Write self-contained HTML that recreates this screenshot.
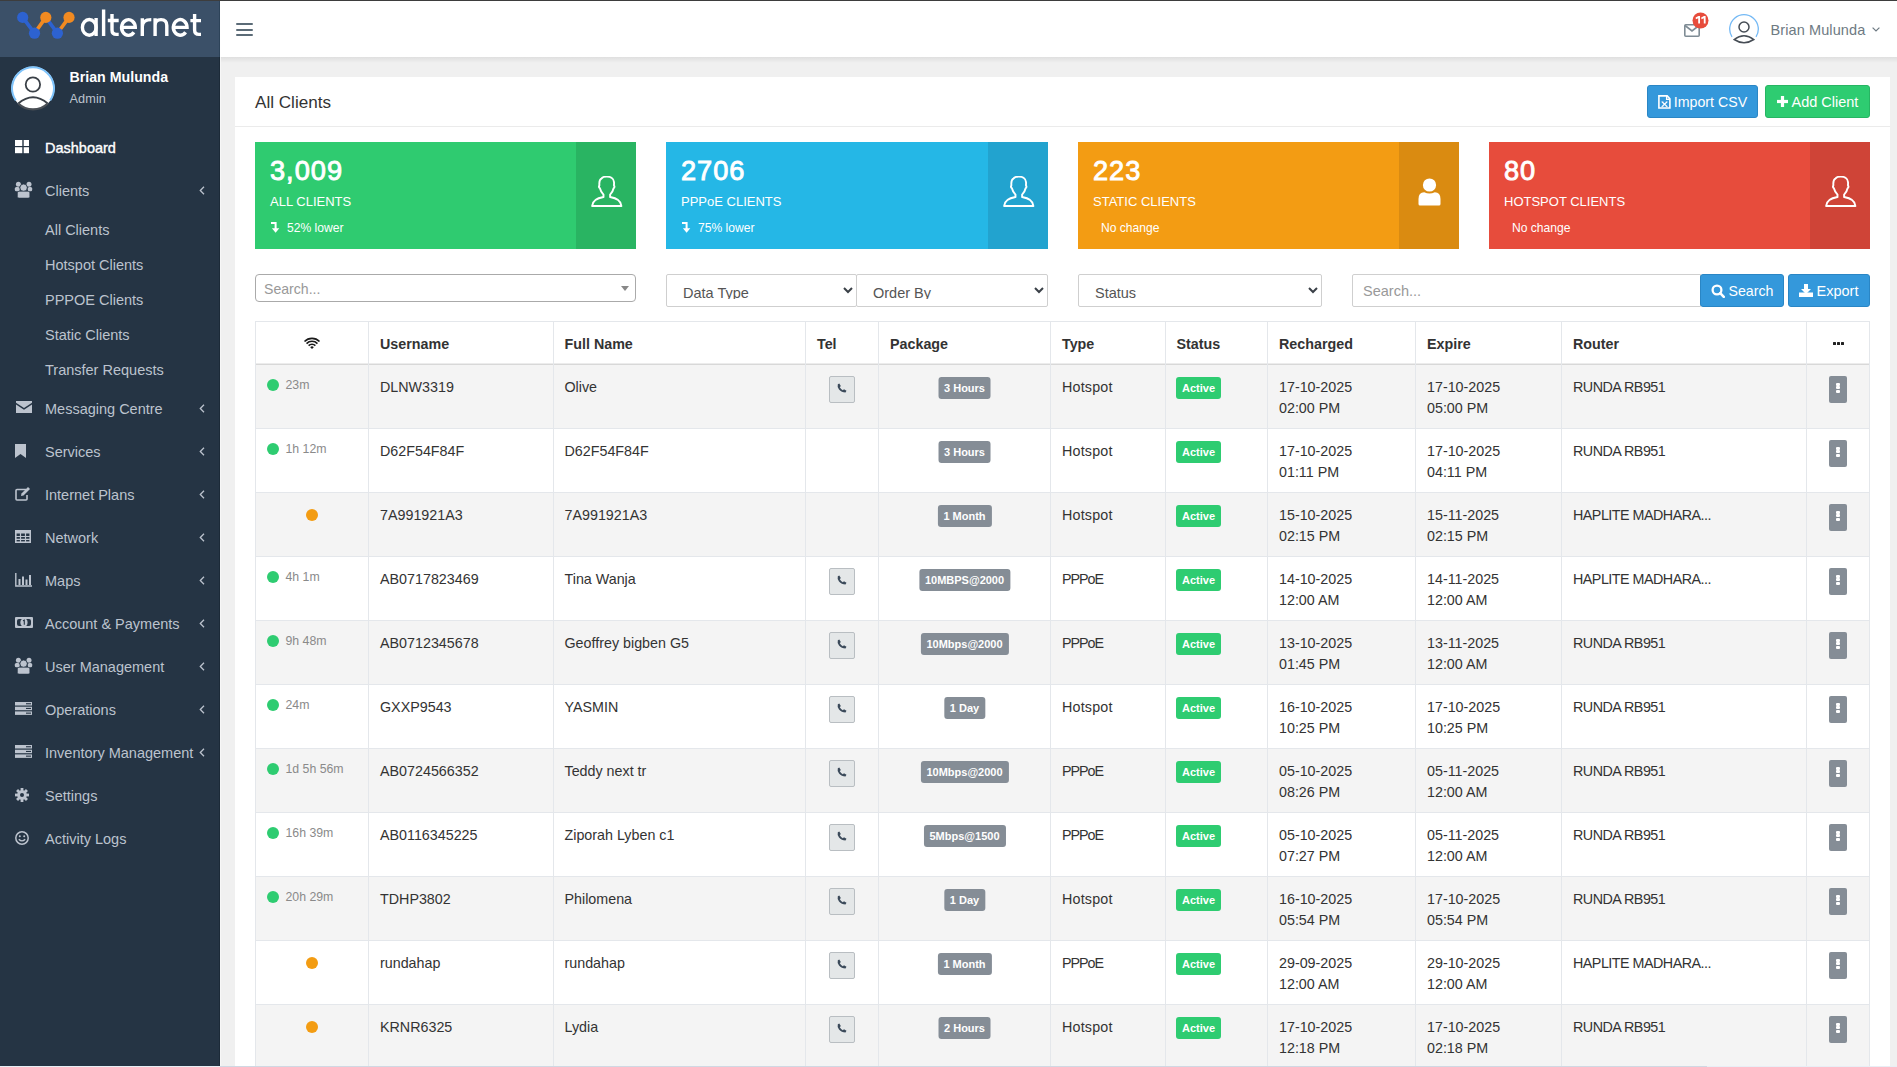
<!DOCTYPE html><html><head><meta charset="utf-8"><title>All Clients</title><style>
*{margin:0;padding:0;box-sizing:content-box;}
html,body{width:1897px;height:1067px;overflow:hidden;background:#f0f0f0;}
body{position:relative;font-family:"Liberation Sans", sans-serif;}
.r{position:absolute;display:block;}
.t{position:absolute;white-space:nowrap;line-height:1;font-family:"Liberation Sans", sans-serif;}
.badge{position:absolute;transform:translateX(-50%);height:22px;line-height:22.5px;padding:0 6px;background:#858d96;color:#fff;font-weight:700;font-size:11px;border-radius:3px;white-space:nowrap;font-family:"Liberation Sans", sans-serif;}
.badge.act{transform:none;background:#2ecc71;padding:0 6px;}
</style></head><body><div class="r" style="left:0px;top:0px;width:1897px;height:1067px;background:#f0f0f0;"></div><div class="r" style="left:220px;top:0px;width:1677px;height:57px;background:#ffffff;"></div><div class="r" style="left:220px;top:57px;width:1677px;height:6px;background:linear-gradient(rgba(0,0,0,0.07),rgba(0,0,0,0));"></div><div class="r" style="left:0px;top:0px;width:1897px;height:1px;background:#3d3d3d;"></div><div class="r" style="left:0px;top:1px;width:220px;height:56px;background:#3b5068;"></div><div class="r" style="left:0px;top:57px;width:220px;height:1010px;background:#253444;"></div><div class="r" style="left:219px;top:1px;width:1px;height:56px;background:#2d4359;"></div><div class="r" style="left:219px;top:57px;width:1px;height:1010px;background:#1c2a38;"></div><div class="r" style="left:220px;top:57px;width:1px;height:1010px;background:#f7f7f7;"></div><svg class="r" style="left:10px;top:0px;" width="72" height="45" viewBox="0 0 72 45"><g stroke-width="3.6" stroke-linecap="round"><line x1="12.7" y1="17.4" x2="24.5" y2="33.2" stroke="#2d62d0"/><line x1="24.5" y1="33.2" x2="35.8" y2="17.4" stroke="#f18a21"/><line x1="35.8" y1="17.4" x2="47.4" y2="33.2" stroke="#2d62d0"/><line x1="47.4" y1="33.2" x2="59" y2="17.4" stroke="#f18a21"/></g><circle cx="12.7" cy="17.4" r="5.6" fill="#2d62d0"/><circle cx="24.5" cy="33.2" r="5.6" fill="#2d62d0"/><circle cx="47.4" cy="33.2" r="5.6" fill="#2d62d0"/><circle cx="35.8" cy="17.4" r="5.6" fill="#f18a21"/><circle cx="59" cy="17.4" r="5.6" fill="#f18a21"/></svg><svg class="r" style="left:0px;top:0px;" width="215" height="45" viewBox="0 0 215 45"><g fill="none" stroke="#fff" stroke-width="3.4"><ellipse cx="89.25" cy="27.4" rx="6.85" ry="7.85"/><path d="M96.1 18 V36"/><path d="M103.6 9.5 V36"/><path d="M112 14 V30 Q112 34.4 116.4 34.4 H118.7 M107.8 20.5 H118.7"/><path d="M121.7 27.4 H135.3 A6.85 7.85 0 1 0 133.9 32.3"/><path d="M142.3 36 V18.2 M142.3 26.5 Q142.3 19.6 151.3 19.6"/><path d="M155.1 18.2 V36 M155.1 25.5 Q155.1 19.6 161 19.6 Q166.8 19.6 166.8 25.5 V36"/><path d="M173.35 27.4 H187.05 A6.85 7.85 0 1 0 185.6 32.3"/><path d="M194.6 13.9 V30 Q194.6 34.4 199 34.4 H201 M190.4 20.6 H201"/></g></svg><div class="r" style="left:236px;top:23px;width:16.5px;height:2.2px;background:#5b6b77;border-radius:1px;"></div><div class="r" style="left:236px;top:29px;width:16.5px;height:2.2px;background:#5b6b77;border-radius:1px;"></div><div class="r" style="left:236px;top:34px;width:16.5px;height:2.2px;background:#5b6b77;border-radius:1px;"></div><svg class="r" style="left:10.5px;top:66.3px;" width="44" height="45" viewBox="0 0 44 45"><circle cx="22" cy="22" r="21.5" fill="#ffffff"/><path d="M4.8 34.4 A21 21 0 1 1 39.2 34.4" fill="none" stroke="#7ec3fb" stroke-width="2"/><circle cx="21.9" cy="18.5" r="7.2" fill="none" stroke="#3a4047" stroke-width="1.8"/><path d="M7.3 37.5 Q22 25 36.7 37.5" fill="none" stroke="#3a4047" stroke-width="1.9"/><path d="M7.3 37.5 A21.2 21.2 0 0 0 36.7 37.5" fill="none" stroke="#4a4f55" stroke-width="2.2"/></svg><div class="t " style="left:69.5px;top:69.98px;font-size:14.2px;color:#ffffff;font-weight:700;">Brian Mulunda</div><div class="t " style="left:69.5px;top:92.65px;font-size:12.7px;color:#bcc3ce;letter-spacing:0.1px;">Admin</div><svg class="r" style="left:14.5px;top:139.5px;" width="14.5" height="16" viewBox="0 0 14.5 16"><rect x="0" y="0" width="7.3" height="6" fill="#fff"/><rect x="8.7" y="0" width="7.3" height="6" fill="#fff"/><rect x="0" y="7.2" width="7.3" height="6" fill="#fff"/><rect x="8.7" y="7.2" width="7.3" height="6" fill="#fff"/></svg><div class="t " style="left:45px;top:140.83px;font-size:14.5px;color:#ffffff;-webkit-text-stroke:0.35px #fff;">Dashboard</div><svg class="r" style="left:14px;top:180.5px;" width="20" height="18" viewBox="0 0 20 18"><circle cx="4.4" cy="3.3" r="2.5" fill="#bcc3ce"/><circle cx="15" cy="3.3" r="2.5" fill="#bcc3ce"/><rect x="0.8" y="6" width="4.9" height="4.2" rx="1.5" fill="#bcc3ce"/><rect x="13.75" y="6" width="4.45" height="4.2" rx="1.5" fill="#bcc3ce"/><circle cx="9.6" cy="6.7" r="3.7" fill="#bcc3ce" stroke="#253444" stroke-width="0.8"/><rect x="3.4" y="10.3" width="12.4" height="6.8" rx="1.6" fill="#bcc3ce" stroke="#253444" stroke-width="0.6"/></svg><div class="t " style="left:45px;top:183.83px;font-size:14.5px;color:#bcc3ce;">Clients</div><svg class="r" style="left:199px;top:186px;" width="6" height="9" viewBox="0 0 6 9"><path d="M5 0.8 L1.3 4.5 L5 8.2" fill="none" stroke="#bcc3ce" stroke-width="1.3"/></svg><svg class="r" style="left:16px;top:401.0px;" width="16" height="13" viewBox="0 0 16 13"><path d="M0 0 H16 V1.8 L8 7 L0 1.8 Z" fill="#bcc3ce"/><path d="M0 3.6 L8 8.8 L16 3.6 V12 H0 Z" fill="#bcc3ce"/></svg><div class="t " style="left:45px;top:401.83px;font-size:14.5px;color:#bcc3ce;">Messaging Centre</div><svg class="r" style="left:199px;top:404px;" width="6" height="9" viewBox="0 0 6 9"><path d="M5 0.8 L1.3 4.5 L5 8.2" fill="none" stroke="#bcc3ce" stroke-width="1.3"/></svg><svg class="r" style="left:15px;top:443.5px;" width="11" height="14" viewBox="0 0 11 14"><path d="M0 0 H11 V14 L5.5 10 L0 14 Z" fill="#bcc3ce"/></svg><div class="t " style="left:45px;top:444.83px;font-size:14.5px;color:#bcc3ce;">Services</div><svg class="r" style="left:199px;top:447px;" width="6" height="9" viewBox="0 0 6 9"><path d="M5 0.8 L1.3 4.5 L5 8.2" fill="none" stroke="#bcc3ce" stroke-width="1.3"/></svg><svg class="r" style="left:15px;top:486.0px;" width="16" height="15" viewBox="0 0 16 15"><path d="M11 3.5 H2 Q1 3.5 1 4.5 V13 Q1 14 2 14 H11 Q12 14 12 13 V9" fill="none" stroke="#bcc3ce" stroke-width="1.6"/><path d="M6 10 L6.5 7.5 L13 1 L15 3 L8.5 9.5 Z" fill="#bcc3ce"/></svg><div class="t " style="left:45px;top:487.83px;font-size:14.5px;color:#bcc3ce;">Internet Plans</div><svg class="r" style="left:199px;top:490px;" width="6" height="9" viewBox="0 0 6 9"><path d="M5 0.8 L1.3 4.5 L5 8.2" fill="none" stroke="#bcc3ce" stroke-width="1.3"/></svg><svg class="r" style="left:15px;top:530.0px;" width="16" height="13" viewBox="0 0 16 13"><rect x="0.8" y="0.8" width="14.4" height="11.4" fill="none" stroke="#bcc3ce" stroke-width="1.6"/><rect x="0" y="0" width="16" height="3.5" fill="#bcc3ce"/><path d="M5.5 3 V12 M10.5 3 V12 M0 6.5 H16 M0 9.3 H16" stroke="#bcc3ce" stroke-width="1.2"/></svg><div class="t " style="left:45px;top:530.83px;font-size:14.5px;color:#bcc3ce;">Network</div><svg class="r" style="left:199px;top:533px;" width="6" height="9" viewBox="0 0 6 9"><path d="M5 0.8 L1.3 4.5 L5 8.2" fill="none" stroke="#bcc3ce" stroke-width="1.3"/></svg><svg class="r" style="left:15px;top:572.5px;" width="18" height="14" viewBox="0 0 18 14"><path d="M0.8 0 V13 H17" fill="none" stroke="#bcc3ce" stroke-width="1.4"/><rect x="3.5" y="6" width="2" height="6" fill="#bcc3ce"/><rect x="7" y="3.5" width="2" height="8.5" fill="#bcc3ce"/><rect x="10.5" y="6.5" width="2" height="5.5" fill="#bcc3ce"/><rect x="14" y="2" width="2" height="10" fill="#bcc3ce"/></svg><div class="t " style="left:45px;top:573.83px;font-size:14.5px;color:#bcc3ce;">Maps</div><svg class="r" style="left:199px;top:576px;" width="6" height="9" viewBox="0 0 6 9"><path d="M5 0.8 L1.3 4.5 L5 8.2" fill="none" stroke="#bcc3ce" stroke-width="1.3"/></svg><svg class="r" style="left:15px;top:617.0px;" width="18" height="11" viewBox="0 0 18 11"><rect x="0" y="0" width="18" height="11" rx="1" fill="#bcc3ce"/><rect x="2" y="2" width="14" height="7" rx="2" fill="#253444"/><ellipse cx="9" cy="5.5" rx="3.6" ry="3.9" fill="#bcc3ce"/><path d="M8 3.8 L9.3 3.2 V7.8" fill="none" stroke="#253444" stroke-width="1.1"/></svg><div class="t " style="left:45px;top:616.83px;font-size:14.5px;color:#bcc3ce;">Account &amp; Payments</div><svg class="r" style="left:199px;top:619px;" width="6" height="9" viewBox="0 0 6 9"><path d="M5 0.8 L1.3 4.5 L5 8.2" fill="none" stroke="#bcc3ce" stroke-width="1.3"/></svg><svg class="r" style="left:14px;top:656.5px;" width="20" height="18" viewBox="0 0 20 18"><circle cx="4.4" cy="3.3" r="2.5" fill="#bcc3ce"/><circle cx="15" cy="3.3" r="2.5" fill="#bcc3ce"/><rect x="0.8" y="6" width="4.9" height="4.2" rx="1.5" fill="#bcc3ce"/><rect x="13.75" y="6" width="4.45" height="4.2" rx="1.5" fill="#bcc3ce"/><circle cx="9.6" cy="6.7" r="3.7" fill="#bcc3ce" stroke="#253444" stroke-width="0.8"/><rect x="3.4" y="10.3" width="12.4" height="6.8" rx="1.6" fill="#bcc3ce" stroke="#253444" stroke-width="0.6"/></svg><div class="t " style="left:45px;top:659.83px;font-size:14.5px;color:#bcc3ce;">User Management</div><svg class="r" style="left:199px;top:662px;" width="6" height="9" viewBox="0 0 6 9"><path d="M5 0.8 L1.3 4.5 L5 8.2" fill="none" stroke="#bcc3ce" stroke-width="1.3"/></svg><svg class="r" style="left:15px;top:702.0px;" width="17" height="13" viewBox="0 0 17 13"><rect x="0" y="0" width="17" height="3.5" fill="#bcc3ce"/><rect x="0" y="4.7" width="17" height="3.5" fill="#bcc3ce"/><rect x="0" y="9.4" width="17" height="3.5" fill="#bcc3ce"/><rect x="11" y="1.2" width="5" height="1.1" fill="#253444"/><rect x="11" y="5.9" width="5" height="1.1" fill="#253444"/><rect x="11" y="10.6" width="5" height="1.1" fill="#253444"/></svg><div class="t " style="left:45px;top:702.83px;font-size:14.5px;color:#bcc3ce;">Operations</div><svg class="r" style="left:199px;top:705px;" width="6" height="9" viewBox="0 0 6 9"><path d="M5 0.8 L1.3 4.5 L5 8.2" fill="none" stroke="#bcc3ce" stroke-width="1.3"/></svg><svg class="r" style="left:15px;top:745.0px;" width="17" height="13" viewBox="0 0 17 13"><rect x="0" y="0" width="17" height="3.5" fill="#bcc3ce"/><rect x="0" y="4.7" width="17" height="3.5" fill="#bcc3ce"/><rect x="0" y="9.4" width="17" height="3.5" fill="#bcc3ce"/><rect x="11" y="1.2" width="5" height="1.1" fill="#253444"/><rect x="11" y="5.9" width="5" height="1.1" fill="#253444"/><rect x="11" y="10.6" width="5" height="1.1" fill="#253444"/></svg><div class="t " style="left:45px;top:745.83px;font-size:14.5px;color:#bcc3ce;">Inventory Management</div><svg class="r" style="left:199px;top:748px;" width="6" height="9" viewBox="0 0 6 9"><path d="M5 0.8 L1.3 4.5 L5 8.2" fill="none" stroke="#bcc3ce" stroke-width="1.3"/></svg><svg class="r" style="left:15px;top:787.5px;" width="14" height="14" viewBox="0 0 14 14"><circle cx="7" cy="7" r="4.8" fill="#bcc3ce"/><rect x="5.6" y="0" width="2.8" height="14" fill="#bcc3ce" transform="rotate(0 7 7)"/><rect x="5.6" y="0" width="2.8" height="14" fill="#bcc3ce" transform="rotate(45 7 7)"/><rect x="5.6" y="0" width="2.8" height="14" fill="#bcc3ce" transform="rotate(90 7 7)"/><rect x="5.6" y="0" width="2.8" height="14" fill="#bcc3ce" transform="rotate(135 7 7)"/><circle cx="7" cy="7" r="2" fill="#253444"/></svg><div class="t " style="left:45px;top:788.83px;font-size:14.5px;color:#bcc3ce;">Settings</div><svg class="r" style="left:15px;top:830.5px;" width="14" height="14" viewBox="0 0 14 14"><circle cx="7" cy="7" r="6.2" fill="none" stroke="#bcc3ce" stroke-width="1.5"/><circle cx="4.8" cy="5.3" r="1" fill="#bcc3ce"/><circle cx="9.2" cy="5.3" r="1" fill="#bcc3ce"/><path d="M3.8 8.2 Q7 11.5 10.2 8.2" fill="none" stroke="#bcc3ce" stroke-width="1.4"/></svg><div class="t " style="left:45px;top:831.83px;font-size:14.5px;color:#bcc3ce;">Activity Logs</div><div class="t " style="left:45px;top:222.83px;font-size:14.5px;color:#bcc3ce;">All Clients</div><div class="t " style="left:45px;top:257.83px;font-size:14.5px;color:#bcc3ce;">Hotspot Clients</div><div class="t " style="left:45px;top:292.83px;font-size:14.5px;color:#bcc3ce;">PPPOE Clients</div><div class="t " style="left:45px;top:327.83px;font-size:14.5px;color:#bcc3ce;">Static Clients</div><div class="t " style="left:45px;top:362.83px;font-size:14.5px;color:#bcc3ce;">Transfer Requests</div><svg class="r" style="left:1684px;top:23.5px;" width="16" height="13" viewBox="0 0 16 13"><rect x="0.8" y="0.8" width="14.4" height="11.4" rx="1" fill="none" stroke="#7f8c95" stroke-width="1.6"/><path d="M1 1.5 L8 7 L15 1.5" fill="none" stroke="#7f8c95" stroke-width="1.6"/></svg><svg class="r" style="left:1691.5px;top:12px;" width="17" height="17" viewBox="0 0 17 17"><circle cx="8.5" cy="8.5" r="8" fill="#e74c3c"/></svg><svg class="r" style="left:1694.5px;top:16.2px;" width="12" height="7.6" viewBox="0 0 12 7.6"><path d="M0.6 1.6 L3.4 0 H5 V7.6 H3.2 V2.2 L0.9 3.2 Z" fill="#fff"/><path d="M6.2 1.6 L9 0 H10.6 V7.6 H8.8 V2.2 L6.5 3.2 Z" fill="#fff"/></svg><svg class="r" style="left:1729px;top:13.5px;" width="30" height="31" viewBox="0 0 30 31"><path d="M3 22.8 A14.3 14.3 0 1 1 27 22.8" fill="none" stroke="#74b9f5" stroke-width="1.3"/><circle cx="15" cy="13" r="5" fill="none" stroke="#464d55" stroke-width="1.5"/><path d="M5.2 25.5 Q15 18 24.8 25.5 Q15 32 5.2 25.5 Z" fill="none" stroke="#464d55" stroke-width="1.5"/></svg><div class="t " style="left:1770.5px;top:22.63px;font-size:14.5px;color:#6e7a83;letter-spacing:0.1px;">Brian Mulunda</div><svg class="r" style="left:1872px;top:27px;" width="8" height="5" viewBox="0 0 8 5"><path d="M0.6 0.6 L4 4 L7.4 0.6" fill="none" stroke="#6e7a83" stroke-width="1.2"/></svg><div class="r" style="left:235px;top:77px;width:1655px;height:990px;background:#ffffff;"></div><div class="t " style="left:255px;top:94.12px;font-size:17.1px;color:#333333;">All Clients</div><div class="r" style="left:235px;top:126px;width:1655px;height:1px;background:#ebebeb;"></div><div class="r" style="left:1647px;top:85px;width:111px;height:33px;background:#3498db;box-sizing:border-box;border:1px solid #2a86c5;border-radius:3px;"></div><svg class="r" style="left:1657px;top:94px;" width="15" height="16" viewBox="0 0 15 16"><path d="M1.9 1.9 H10.2 L12.9 4.9 V14 H1.9 Z" fill="none" stroke="#fff" stroke-width="1.6" stroke-linejoin="miter"/><path d="M9.6 2 V5.4 H12.8" fill="none" stroke="#fff" stroke-width="1.3"/><path d="M5.2 8 L9.9 12.4 M9.9 8 L5.2 12.4" stroke="#fff" stroke-width="1.25"/><path d="M4.4 7.9 H6.4 M8.8 7.9 H10.7 M4.4 12.5 H6.4 M8.8 12.5 H10.7" stroke="#fff" stroke-width="0.7"/></svg><div class="t " style="left:1673.8px;top:95.38px;font-size:14.2px;color:#ffffff;">Import CSV</div><div class="r" style="left:1765px;top:85px;width:105px;height:33px;background:#2ecc71;box-sizing:border-box;border:1px solid #27b563;border-radius:3px;"></div><svg class="r" style="left:1777px;top:96px;" width="11" height="11" viewBox="0 0 11 11"><rect x="3.9" y="0" width="3.2" height="11" fill="#fff"/><rect x="0" y="3.9" width="11" height="3.2" fill="#fff"/></svg><div class="t " style="left:1791.5px;top:94.93px;font-size:14.5px;color:#ffffff;">Add Client</div><div class="r" style="left:255.0px;top:142px;width:381.25px;height:107px;background:#2fcb70;"></div><div class="r" style="left:576.25px;top:142px;width:60px;height:107px;background:#29b462;"></div><div class="t " style="left:270px;top:156.98px;font-size:27.2px;color:#ffffff;letter-spacing:1.0px;-webkit-text-stroke:0.9px #fff;">3,009</div><div class="t " style="left:270px;top:195.00px;font-size:13px;color:#ffffff;">ALL CLIENTS</div><svg class="r" style="left:270.5px;top:222px;" width="9" height="11" viewBox="0 0 9 11"><path d="M0 0 H5.6 V6.2 H8.3 L4.6 10.8 L0.9 6.2 H3.6 V2 H0 Z" fill="#fff"/></svg><div class="t " style="left:287px;top:221.96px;font-size:12.1px;color:#ffffff;">52% lower</div><svg class="r" style="left:591px;top:176px;" width="32" height="32" viewBox="0 0 32 32"><path d="M12.5 21 L12.5 18.6 C10.6 16.6 9.4 14.2 8.9 12.2 C8.1 11.6 7.9 10.1 8.4 9.3 C8.1 6.2 8.2 3.6 10.6 2.4 C11.6 0.9 13.6 0.6 15.8 0.6 C19.6 0.6 22.8 2.6 23 6.1 C23.2 7.6 23 8.6 22.9 9.3 C23.5 10.1 23.3 11.6 22.6 12.2 C22.2 14.2 21 16.6 19.1 18.6 L19.1 21 C25.2 22 30 24.6 30.4 30 L1.1 30 C1.5 24.6 6.4 22 12.5 21 Z" fill="none" stroke="#fff" stroke-width="1.9" stroke-linejoin="round"/></svg><div class="r" style="left:666.25px;top:142px;width:381.25px;height:107px;background:#25b7e6;"></div><div class="r" style="left:987.5px;top:142px;width:60px;height:107px;background:#22a3cf;"></div><div class="t " style="left:681px;top:156.98px;font-size:27.2px;color:#ffffff;letter-spacing:1.0px;-webkit-text-stroke:0.9px #fff;">2706</div><div class="t " style="left:681px;top:195.00px;font-size:13px;color:#ffffff;">PPPoE CLIENTS</div><svg class="r" style="left:681.5px;top:222px;" width="9" height="11" viewBox="0 0 9 11"><path d="M0 0 H5.6 V6.2 H8.3 L4.6 10.8 L0.9 6.2 H3.6 V2 H0 Z" fill="#fff"/></svg><div class="t " style="left:698px;top:221.96px;font-size:12.1px;color:#ffffff;">75% lower</div><svg class="r" style="left:1003px;top:176px;" width="32" height="32" viewBox="0 0 32 32"><path d="M12.5 21 L12.5 18.6 C10.6 16.6 9.4 14.2 8.9 12.2 C8.1 11.6 7.9 10.1 8.4 9.3 C8.1 6.2 8.2 3.6 10.6 2.4 C11.6 0.9 13.6 0.6 15.8 0.6 C19.6 0.6 22.8 2.6 23 6.1 C23.2 7.6 23 8.6 22.9 9.3 C23.5 10.1 23.3 11.6 22.6 12.2 C22.2 14.2 21 16.6 19.1 18.6 L19.1 21 C25.2 22 30 24.6 30.4 30 L1.1 30 C1.5 24.6 6.4 22 12.5 21 Z" fill="none" stroke="#fff" stroke-width="1.9" stroke-linejoin="round"/></svg><div class="r" style="left:1077.5px;top:142px;width:381.25px;height:107px;background:#f39c13;"></div><div class="r" style="left:1398.75px;top:142px;width:60px;height:107px;background:#da8b11;"></div><div class="t " style="left:1093px;top:156.98px;font-size:27.2px;color:#ffffff;letter-spacing:1.0px;-webkit-text-stroke:0.9px #fff;">223</div><div class="t " style="left:1093px;top:195.00px;font-size:13px;color:#ffffff;">STATIC CLIENTS</div><div class="t " style="left:1101px;top:221.96px;font-size:12.1px;color:#ffffff;">No change</div><svg class="r" style="left:1417.5px;top:178px;" width="23" height="28" viewBox="0 0 23 28"><circle cx="11.5" cy="7" r="6.6" fill="#fff"/><path d="M0.5 26 V21 Q0.5 14.2 6.2 14.2 Q11.5 17 16.8 14.2 Q22.5 14.2 22.5 21 V26 Q22.5 27.5 21 27.5 H2 Q0.5 27.5 0.5 26 Z" fill="#fff"/></svg><div class="r" style="left:1488.75px;top:142px;width:381.25px;height:107px;background:#e74c3c;"></div><div class="r" style="left:1810.0px;top:142px;width:60px;height:107px;background:#cf4437;"></div><div class="t " style="left:1504px;top:156.98px;font-size:27.2px;color:#ffffff;letter-spacing:1.0px;-webkit-text-stroke:0.9px #fff;">80</div><div class="t " style="left:1504px;top:195.00px;font-size:13px;color:#ffffff;">HOTSPOT CLIENTS</div><div class="t " style="left:1512px;top:221.96px;font-size:12.1px;color:#ffffff;">No change</div><svg class="r" style="left:1825px;top:176px;" width="32" height="32" viewBox="0 0 32 32"><path d="M12.5 21 L12.5 18.6 C10.6 16.6 9.4 14.2 8.9 12.2 C8.1 11.6 7.9 10.1 8.4 9.3 C8.1 6.2 8.2 3.6 10.6 2.4 C11.6 0.9 13.6 0.6 15.8 0.6 C19.6 0.6 22.8 2.6 23 6.1 C23.2 7.6 23 8.6 22.9 9.3 C23.5 10.1 23.3 11.6 22.6 12.2 C22.2 14.2 21 16.6 19.1 18.6 L19.1 21 C25.2 22 30 24.6 30.4 30 L1.1 30 C1.5 24.6 6.4 22 12.5 21 Z" fill="none" stroke="#fff" stroke-width="1.9" stroke-linejoin="round"/></svg><div class="r" style="left:255px;top:274px;width:381px;height:28px;background:#ffffff;box-sizing:border-box;border:1px solid #aaaaaa;border-radius:4px;"></div><div class="t " style="left:264px;top:282.26px;font-size:14.1px;color:#999999;">Search...</div><svg class="r" style="left:621px;top:286px;" width="8" height="5" viewBox="0 0 8 5"><path d="M0 0 H8 L4 5 Z" fill="#888"/></svg><div class="r" style="left:666px;top:274px;width:191px;height:33px;background:#ffffff;box-sizing:border-box;border:1px solid #cfcfcf;border-radius:2px;"></div><div class="r" style="left:667px;top:275px;width:189px;height:24px;overflow:hidden;"><div class="t" style="left:16px;top:10.73px;font-size:14.5px;color:#555;">Data Type</div></div><svg class="r" style="left:843px;top:287px;" width="10" height="7" viewBox="0 0 10 7"><path d="M1 1 L5 5 L9 1" fill="none" stroke="#3a4047" stroke-width="2"/></svg><div class="r" style="left:856px;top:274px;width:192px;height:33px;background:#ffffff;box-sizing:border-box;border:1px solid #cfcfcf;border-radius:2px;"></div><div class="r" style="left:857px;top:275px;width:190px;height:24px;overflow:hidden;"><div class="t" style="left:16px;top:10.73px;font-size:14.5px;color:#555;">Order By</div></div><svg class="r" style="left:1034px;top:287px;" width="10" height="7" viewBox="0 0 10 7"><path d="M1 1 L5 5 L9 1" fill="none" stroke="#3a4047" stroke-width="2"/></svg><div class="r" style="left:1078px;top:274px;width:244px;height:33px;background:#ffffff;box-sizing:border-box;border:1px solid #cfcfcf;border-radius:2px;"></div><div class="r" style="left:1079px;top:275px;width:242px;height:24px;overflow:hidden;"><div class="t" style="left:16px;top:10.73px;font-size:14.5px;color:#555;">Status</div></div><svg class="r" style="left:1308px;top:287px;" width="10" height="7" viewBox="0 0 10 7"><path d="M1 1 L5 5 L9 1" fill="none" stroke="#3a4047" stroke-width="2"/></svg><div class="r" style="left:1352px;top:274px;width:349px;height:33px;background:#ffffff;box-sizing:border-box;border:1px solid #cfcfcf;border-radius:2px 0 0 2px;"></div><div class="t " style="left:1363px;top:284.33px;font-size:14.5px;color:#999999;">Search...</div><div class="r" style="left:1700px;top:274px;width:84px;height:33px;background:#3498db;box-sizing:border-box;border:1px solid #2a86c5;border-radius:3px;"></div><svg class="r" style="left:1711px;top:284px;" width="14" height="14" viewBox="0 0 14 14"><circle cx="6" cy="6" r="4.4" fill="none" stroke="#fff" stroke-width="2.3"/><path d="M9.2 9.2 L12.8 12.8" stroke="#fff" stroke-width="2.6" stroke-linecap="round"/></svg><div class="t " style="left:1728.5px;top:283.98px;font-size:14.2px;color:#ffffff;">Search</div><div class="r" style="left:1788px;top:274px;width:82px;height:33px;background:#3498db;box-sizing:border-box;border:1px solid #2a86c5;border-radius:3px;"></div><svg class="r" style="left:1799px;top:284px;" width="14" height="13" viewBox="0 0 14 13"><path d="M5 0 H9 V5 H12 L7 10 L2 5 H5 Z" fill="#fff"/><rect x="0" y="8.5" width="14" height="4.5" fill="#fff"/><path d="M7 7 L3.5 10" stroke="#3498db" stroke-width="0"/></svg><div class="t " style="left:1816.5px;top:283.73px;font-size:14.5px;color:#ffffff;">Export</div><div class="r" style="left:255px;top:365px;width:1614px;height:64px;background:#f4f4f4;"></div><div class="r" style="left:255px;top:493px;width:1614px;height:64px;background:#f4f4f4;"></div><div class="r" style="left:255px;top:621px;width:1614px;height:64px;background:#f4f4f4;"></div><div class="r" style="left:255px;top:749px;width:1614px;height:64px;background:#f4f4f4;"></div><div class="r" style="left:255px;top:877px;width:1614px;height:64px;background:#f4f4f4;"></div><div class="r" style="left:255px;top:1005px;width:1614px;height:64px;background:#f4f4f4;"></div><div class="r" style="left:255px;top:321px;width:1615px;height:1px;background:#e4e7eb;"></div><div class="r" style="left:255px;top:363px;width:1615px;height:1px;background:#ececec;"></div><div class="r" style="left:255px;top:364px;width:1615px;height:1px;background:#d8d8d8;"></div><div class="r" style="left:255px;top:428px;width:1615px;height:1px;background:#e4e7eb;"></div><div class="r" style="left:255px;top:492px;width:1615px;height:1px;background:#e4e7eb;"></div><div class="r" style="left:255px;top:556px;width:1615px;height:1px;background:#e4e7eb;"></div><div class="r" style="left:255px;top:620px;width:1615px;height:1px;background:#e4e7eb;"></div><div class="r" style="left:255px;top:684px;width:1615px;height:1px;background:#e4e7eb;"></div><div class="r" style="left:255px;top:748px;width:1615px;height:1px;background:#e4e7eb;"></div><div class="r" style="left:255px;top:812px;width:1615px;height:1px;background:#e4e7eb;"></div><div class="r" style="left:255px;top:876px;width:1615px;height:1px;background:#e4e7eb;"></div><div class="r" style="left:255px;top:940px;width:1615px;height:1px;background:#e4e7eb;"></div><div class="r" style="left:255px;top:1004px;width:1615px;height:1px;background:#e4e7eb;"></div><div class="r" style="left:255px;top:1068px;width:1615px;height:1px;background:#e4e7eb;"></div><div class="r" style="left:255px;top:321px;width:1px;height:746px;background:#e4e7eb;"></div><div class="r" style="left:368px;top:321px;width:1px;height:746px;background:#e4e7eb;"></div><div class="r" style="left:553px;top:321px;width:1px;height:746px;background:#e4e7eb;"></div><div class="r" style="left:805px;top:321px;width:1px;height:746px;background:#e4e7eb;"></div><div class="r" style="left:878px;top:321px;width:1px;height:746px;background:#e4e7eb;"></div><div class="r" style="left:1050px;top:321px;width:1px;height:746px;background:#e4e7eb;"></div><div class="r" style="left:1165px;top:321px;width:1px;height:746px;background:#e4e7eb;"></div><div class="r" style="left:1267px;top:321px;width:1px;height:746px;background:#e4e7eb;"></div><div class="r" style="left:1415px;top:321px;width:1px;height:746px;background:#e4e7eb;"></div><div class="r" style="left:1561px;top:321px;width:1px;height:746px;background:#e4e7eb;"></div><div class="r" style="left:1806px;top:321px;width:1px;height:746px;background:#e4e7eb;"></div><div class="r" style="left:1869px;top:321px;width:1px;height:746px;background:#e4e7eb;"></div><div class="t " style="left:380.0px;top:336.80px;font-size:14.3px;color:#333333;font-weight:700;">Username</div><div class="t " style="left:564.5px;top:336.80px;font-size:14.3px;color:#333333;font-weight:700;">Full Name</div><div class="t " style="left:817.0px;top:336.80px;font-size:14.3px;color:#333333;font-weight:700;">Tel</div><div class="t " style="left:890.0px;top:336.80px;font-size:14.3px;color:#333333;font-weight:700;">Package</div><div class="t " style="left:1062.0px;top:336.80px;font-size:14.3px;color:#333333;font-weight:700;">Type</div><div class="t " style="left:1176.5px;top:336.80px;font-size:14.3px;color:#333333;font-weight:700;">Status</div><div class="t " style="left:1279.0px;top:336.80px;font-size:14.3px;color:#333333;font-weight:700;">Recharged</div><div class="t " style="left:1427.0px;top:336.80px;font-size:14.3px;color:#333333;font-weight:700;">Expire</div><div class="t " style="left:1573.0px;top:336.80px;font-size:14.3px;color:#333333;font-weight:700;">Router</div><svg class="r" style="left:300px;top:335px;" width="24" height="16" viewBox="0 0 24 16"><g fill="none" stroke="#1a1a1a" stroke-width="1.6"><path d="M4.5 6.5 A10.6 10.6 0 0 1 19.5 6.5"/><path d="M6.56 8.56 A7.7 7.7 0 0 1 17.44 8.56"/><path d="M8.6 10.6 A4.8 4.8 0 0 1 15.4 10.6"/></g><path d="M12 14 L10.2 12.2 A2.5 2.5 0 0 1 13.8 12.2 Z" fill="#1a1a1a"/></svg><div class="r" style="left:1833px;top:342px;width:3px;height:3px;background:#222;border-radius:0.5px;"></div><div class="r" style="left:1837px;top:342px;width:3px;height:3px;background:#222;border-radius:0.5px;"></div><div class="r" style="left:1841px;top:342px;width:3px;height:3px;background:#222;border-radius:0.5px;"></div><div class="r" style="left:266.5px;top:378.8px;width:12px;height:12px;background:#2ecc71;border-radius:50%;"></div><div class="t " style="left:285.5px;top:378.89px;font-size:12.3px;color:#8a8a8a;">23m</div><div class="t " style="left:380px;top:379.70px;font-size:14.3px;color:#333333;">DLNW3319</div><div class="t " style="left:564.5px;top:379.70px;font-size:14.3px;color:#333333;">Olive</div><div class="r" style="left:829px;top:376px;width:26px;height:27px;background:#e4e7e8;box-sizing:border-box;border:1px solid #b9bec2;border-radius:2px;"></div><svg class="r" style="left:837px;top:382.6px;" width="10" height="10" viewBox="0 0 10 10"><path d="M2.3 0.5 L3.8 3 L2.8 4.3 Q4 6.5 5.8 7.3 L7 6.2 L9.5 7.7 L8.5 9.5 Q4.5 9.5 2 6.5 Q0 4 0.8 1.2 Z" fill="#3b4a5a"/></svg><div class="badge" style="left:964.5px;top:377px;">3 Hours</div><div class="t " style="left:1062.0px;top:379.70px;font-size:14.3px;color:#333333;letter-spacing:0.2px;">Hotspot</div><div class="badge act" style="left:1176px;top:377px;">Active</div><div class="t " style="left:1279.0px;top:379.70px;font-size:14.3px;color:#333333;">17-10-2025</div><div class="t " style="left:1279.0px;top:400.70px;font-size:14.3px;color:#333333;">02:00 PM</div><div class="t " style="left:1427.0px;top:379.70px;font-size:14.3px;color:#333333;">17-10-2025</div><div class="t " style="left:1427.0px;top:400.70px;font-size:14.3px;color:#333333;">05:00 PM</div><div class="t " style="left:1573.0px;top:379.70px;font-size:14.3px;color:#333333;letter-spacing:-0.5px;">RUNDA RB951</div><div class="r" style="left:1829px;top:376px;width:18px;height:27px;background:#858d96;border-radius:2px;"></div><div class="r" style="left:1836.1px;top:382.8px;width:3.9px;height:3.2px;background:#fff;border-radius:1px;"></div><div class="r" style="left:1836.1px;top:386.2px;width:3.9px;height:3.2px;background:#fff;border-radius:1px;"></div><div class="r" style="left:1836.1px;top:389.6px;width:3.9px;height:3.2px;background:#fff;border-radius:1px;"></div><div class="r" style="left:266.5px;top:442.8px;width:12px;height:12px;background:#2ecc71;border-radius:50%;"></div><div class="t " style="left:285.5px;top:442.89px;font-size:12.3px;color:#8a8a8a;">1h 12m</div><div class="t " style="left:380px;top:443.70px;font-size:14.3px;color:#333333;">D62F54F84F</div><div class="t " style="left:564.5px;top:443.70px;font-size:14.3px;color:#333333;">D62F54F84F</div><div class="badge" style="left:964.5px;top:441px;">3 Hours</div><div class="t " style="left:1062.0px;top:443.70px;font-size:14.3px;color:#333333;letter-spacing:0.2px;">Hotspot</div><div class="badge act" style="left:1176px;top:441px;">Active</div><div class="t " style="left:1279.0px;top:443.70px;font-size:14.3px;color:#333333;">17-10-2025</div><div class="t " style="left:1279.0px;top:464.70px;font-size:14.3px;color:#333333;">01:11 PM</div><div class="t " style="left:1427.0px;top:443.70px;font-size:14.3px;color:#333333;">17-10-2025</div><div class="t " style="left:1427.0px;top:464.70px;font-size:14.3px;color:#333333;">04:11 PM</div><div class="t " style="left:1573.0px;top:443.70px;font-size:14.3px;color:#333333;letter-spacing:-0.5px;">RUNDA RB951</div><div class="r" style="left:1829px;top:440px;width:18px;height:27px;background:#858d96;border-radius:2px;"></div><div class="r" style="left:1836.1px;top:446.8px;width:3.9px;height:3.2px;background:#fff;border-radius:1px;"></div><div class="r" style="left:1836.1px;top:450.2px;width:3.9px;height:3.2px;background:#fff;border-radius:1px;"></div><div class="r" style="left:1836.1px;top:453.6px;width:3.9px;height:3.2px;background:#fff;border-radius:1px;"></div><div class="r" style="left:306px;top:508.7px;width:12px;height:12px;background:#f39c12;border-radius:50%;"></div><div class="t " style="left:380px;top:507.70px;font-size:14.3px;color:#333333;">7A991921A3</div><div class="t " style="left:564.5px;top:507.70px;font-size:14.3px;color:#333333;">7A991921A3</div><div class="badge" style="left:964.5px;top:505px;">1 Month</div><div class="t " style="left:1062.0px;top:507.70px;font-size:14.3px;color:#333333;letter-spacing:0.2px;">Hotspot</div><div class="badge act" style="left:1176px;top:505px;">Active</div><div class="t " style="left:1279.0px;top:507.70px;font-size:14.3px;color:#333333;">15-10-2025</div><div class="t " style="left:1279.0px;top:528.70px;font-size:14.3px;color:#333333;">02:15 PM</div><div class="t " style="left:1427.0px;top:507.70px;font-size:14.3px;color:#333333;">15-11-2025</div><div class="t " style="left:1427.0px;top:528.70px;font-size:14.3px;color:#333333;">02:15 PM</div><div class="t " style="left:1573.0px;top:507.70px;font-size:14.3px;color:#333333;letter-spacing:-0.5px;">HAPLITE MADHARA...</div><div class="r" style="left:1829px;top:504px;width:18px;height:27px;background:#858d96;border-radius:2px;"></div><div class="r" style="left:1836.1px;top:510.8px;width:3.9px;height:3.2px;background:#fff;border-radius:1px;"></div><div class="r" style="left:1836.1px;top:514.2px;width:3.9px;height:3.2px;background:#fff;border-radius:1px;"></div><div class="r" style="left:1836.1px;top:517.6px;width:3.9px;height:3.2px;background:#fff;border-radius:1px;"></div><div class="r" style="left:266.5px;top:570.8px;width:12px;height:12px;background:#2ecc71;border-radius:50%;"></div><div class="t " style="left:285.5px;top:570.89px;font-size:12.3px;color:#8a8a8a;">4h 1m</div><div class="t " style="left:380px;top:571.70px;font-size:14.3px;color:#333333;">AB0717823469</div><div class="t " style="left:564.5px;top:571.70px;font-size:14.3px;color:#333333;">Tina Wanja</div><div class="r" style="left:829px;top:568px;width:26px;height:27px;background:#e4e7e8;box-sizing:border-box;border:1px solid #b9bec2;border-radius:2px;"></div><svg class="r" style="left:837px;top:574.6px;" width="10" height="10" viewBox="0 0 10 10"><path d="M2.3 0.5 L3.8 3 L2.8 4.3 Q4 6.5 5.8 7.3 L7 6.2 L9.5 7.7 L8.5 9.5 Q4.5 9.5 2 6.5 Q0 4 0.8 1.2 Z" fill="#3b4a5a"/></svg><div class="badge" style="left:964.5px;top:569px;">10MBPS@2000</div><div class="t " style="left:1062.0px;top:571.70px;font-size:14.3px;color:#333333;letter-spacing:-1.0px;">PPPoE</div><div class="badge act" style="left:1176px;top:569px;">Active</div><div class="t " style="left:1279.0px;top:571.70px;font-size:14.3px;color:#333333;">14-10-2025</div><div class="t " style="left:1279.0px;top:592.70px;font-size:14.3px;color:#333333;">12:00 AM</div><div class="t " style="left:1427.0px;top:571.70px;font-size:14.3px;color:#333333;">14-11-2025</div><div class="t " style="left:1427.0px;top:592.70px;font-size:14.3px;color:#333333;">12:00 AM</div><div class="t " style="left:1573.0px;top:571.70px;font-size:14.3px;color:#333333;letter-spacing:-0.5px;">HAPLITE MADHARA...</div><div class="r" style="left:1829px;top:568px;width:18px;height:27px;background:#858d96;border-radius:2px;"></div><div class="r" style="left:1836.1px;top:574.8px;width:3.9px;height:3.2px;background:#fff;border-radius:1px;"></div><div class="r" style="left:1836.1px;top:578.2px;width:3.9px;height:3.2px;background:#fff;border-radius:1px;"></div><div class="r" style="left:1836.1px;top:581.6px;width:3.9px;height:3.2px;background:#fff;border-radius:1px;"></div><div class="r" style="left:266.5px;top:634.8px;width:12px;height:12px;background:#2ecc71;border-radius:50%;"></div><div class="t " style="left:285.5px;top:634.89px;font-size:12.3px;color:#8a8a8a;">9h 48m</div><div class="t " style="left:380px;top:635.70px;font-size:14.3px;color:#333333;">AB0712345678</div><div class="t " style="left:564.5px;top:635.70px;font-size:14.3px;color:#333333;">Geoffrey bigben G5</div><div class="r" style="left:829px;top:632px;width:26px;height:27px;background:#e4e7e8;box-sizing:border-box;border:1px solid #b9bec2;border-radius:2px;"></div><svg class="r" style="left:837px;top:638.6px;" width="10" height="10" viewBox="0 0 10 10"><path d="M2.3 0.5 L3.8 3 L2.8 4.3 Q4 6.5 5.8 7.3 L7 6.2 L9.5 7.7 L8.5 9.5 Q4.5 9.5 2 6.5 Q0 4 0.8 1.2 Z" fill="#3b4a5a"/></svg><div class="badge" style="left:964.5px;top:633px;">10Mbps@2000</div><div class="t " style="left:1062.0px;top:635.70px;font-size:14.3px;color:#333333;letter-spacing:-1.0px;">PPPoE</div><div class="badge act" style="left:1176px;top:633px;">Active</div><div class="t " style="left:1279.0px;top:635.70px;font-size:14.3px;color:#333333;">13-10-2025</div><div class="t " style="left:1279.0px;top:656.70px;font-size:14.3px;color:#333333;">01:45 PM</div><div class="t " style="left:1427.0px;top:635.70px;font-size:14.3px;color:#333333;">13-11-2025</div><div class="t " style="left:1427.0px;top:656.70px;font-size:14.3px;color:#333333;">12:00 AM</div><div class="t " style="left:1573.0px;top:635.70px;font-size:14.3px;color:#333333;letter-spacing:-0.5px;">RUNDA RB951</div><div class="r" style="left:1829px;top:632px;width:18px;height:27px;background:#858d96;border-radius:2px;"></div><div class="r" style="left:1836.1px;top:638.8px;width:3.9px;height:3.2px;background:#fff;border-radius:1px;"></div><div class="r" style="left:1836.1px;top:642.2px;width:3.9px;height:3.2px;background:#fff;border-radius:1px;"></div><div class="r" style="left:1836.1px;top:645.6px;width:3.9px;height:3.2px;background:#fff;border-radius:1px;"></div><div class="r" style="left:266.5px;top:698.8px;width:12px;height:12px;background:#2ecc71;border-radius:50%;"></div><div class="t " style="left:285.5px;top:698.89px;font-size:12.3px;color:#8a8a8a;">24m</div><div class="t " style="left:380px;top:699.70px;font-size:14.3px;color:#333333;">GXXP9543</div><div class="t " style="left:564.5px;top:699.70px;font-size:14.3px;color:#333333;">YASMIN</div><div class="r" style="left:829px;top:696px;width:26px;height:27px;background:#e4e7e8;box-sizing:border-box;border:1px solid #b9bec2;border-radius:2px;"></div><svg class="r" style="left:837px;top:702.6px;" width="10" height="10" viewBox="0 0 10 10"><path d="M2.3 0.5 L3.8 3 L2.8 4.3 Q4 6.5 5.8 7.3 L7 6.2 L9.5 7.7 L8.5 9.5 Q4.5 9.5 2 6.5 Q0 4 0.8 1.2 Z" fill="#3b4a5a"/></svg><div class="badge" style="left:964.5px;top:697px;">1 Day</div><div class="t " style="left:1062.0px;top:699.70px;font-size:14.3px;color:#333333;letter-spacing:0.2px;">Hotspot</div><div class="badge act" style="left:1176px;top:697px;">Active</div><div class="t " style="left:1279.0px;top:699.70px;font-size:14.3px;color:#333333;">16-10-2025</div><div class="t " style="left:1279.0px;top:720.70px;font-size:14.3px;color:#333333;">10:25 PM</div><div class="t " style="left:1427.0px;top:699.70px;font-size:14.3px;color:#333333;">17-10-2025</div><div class="t " style="left:1427.0px;top:720.70px;font-size:14.3px;color:#333333;">10:25 PM</div><div class="t " style="left:1573.0px;top:699.70px;font-size:14.3px;color:#333333;letter-spacing:-0.5px;">RUNDA RB951</div><div class="r" style="left:1829px;top:696px;width:18px;height:27px;background:#858d96;border-radius:2px;"></div><div class="r" style="left:1836.1px;top:702.8px;width:3.9px;height:3.2px;background:#fff;border-radius:1px;"></div><div class="r" style="left:1836.1px;top:706.2px;width:3.9px;height:3.2px;background:#fff;border-radius:1px;"></div><div class="r" style="left:1836.1px;top:709.6px;width:3.9px;height:3.2px;background:#fff;border-radius:1px;"></div><div class="r" style="left:266.5px;top:762.8px;width:12px;height:12px;background:#2ecc71;border-radius:50%;"></div><div class="t " style="left:285.5px;top:762.89px;font-size:12.3px;color:#8a8a8a;">1d 5h 56m</div><div class="t " style="left:380px;top:763.70px;font-size:14.3px;color:#333333;">AB0724566352</div><div class="t " style="left:564.5px;top:763.70px;font-size:14.3px;color:#333333;">Teddy next tr</div><div class="r" style="left:829px;top:760px;width:26px;height:27px;background:#e4e7e8;box-sizing:border-box;border:1px solid #b9bec2;border-radius:2px;"></div><svg class="r" style="left:837px;top:766.6px;" width="10" height="10" viewBox="0 0 10 10"><path d="M2.3 0.5 L3.8 3 L2.8 4.3 Q4 6.5 5.8 7.3 L7 6.2 L9.5 7.7 L8.5 9.5 Q4.5 9.5 2 6.5 Q0 4 0.8 1.2 Z" fill="#3b4a5a"/></svg><div class="badge" style="left:964.5px;top:761px;">10Mbps@2000</div><div class="t " style="left:1062.0px;top:763.70px;font-size:14.3px;color:#333333;letter-spacing:-1.0px;">PPPoE</div><div class="badge act" style="left:1176px;top:761px;">Active</div><div class="t " style="left:1279.0px;top:763.70px;font-size:14.3px;color:#333333;">05-10-2025</div><div class="t " style="left:1279.0px;top:784.70px;font-size:14.3px;color:#333333;">08:26 PM</div><div class="t " style="left:1427.0px;top:763.70px;font-size:14.3px;color:#333333;">05-11-2025</div><div class="t " style="left:1427.0px;top:784.70px;font-size:14.3px;color:#333333;">12:00 AM</div><div class="t " style="left:1573.0px;top:763.70px;font-size:14.3px;color:#333333;letter-spacing:-0.5px;">RUNDA RB951</div><div class="r" style="left:1829px;top:760px;width:18px;height:27px;background:#858d96;border-radius:2px;"></div><div class="r" style="left:1836.1px;top:766.8px;width:3.9px;height:3.2px;background:#fff;border-radius:1px;"></div><div class="r" style="left:1836.1px;top:770.2px;width:3.9px;height:3.2px;background:#fff;border-radius:1px;"></div><div class="r" style="left:1836.1px;top:773.6px;width:3.9px;height:3.2px;background:#fff;border-radius:1px;"></div><div class="r" style="left:266.5px;top:826.8px;width:12px;height:12px;background:#2ecc71;border-radius:50%;"></div><div class="t " style="left:285.5px;top:826.89px;font-size:12.3px;color:#8a8a8a;">16h 39m</div><div class="t " style="left:380px;top:827.70px;font-size:14.3px;color:#333333;">AB0116345225</div><div class="t " style="left:564.5px;top:827.70px;font-size:14.3px;color:#333333;">Ziporah Lyben c1</div><div class="r" style="left:829px;top:824px;width:26px;height:27px;background:#e4e7e8;box-sizing:border-box;border:1px solid #b9bec2;border-radius:2px;"></div><svg class="r" style="left:837px;top:830.6px;" width="10" height="10" viewBox="0 0 10 10"><path d="M2.3 0.5 L3.8 3 L2.8 4.3 Q4 6.5 5.8 7.3 L7 6.2 L9.5 7.7 L8.5 9.5 Q4.5 9.5 2 6.5 Q0 4 0.8 1.2 Z" fill="#3b4a5a"/></svg><div class="badge" style="left:964.5px;top:825px;">5Mbps@1500</div><div class="t " style="left:1062.0px;top:827.70px;font-size:14.3px;color:#333333;letter-spacing:-1.0px;">PPPoE</div><div class="badge act" style="left:1176px;top:825px;">Active</div><div class="t " style="left:1279.0px;top:827.70px;font-size:14.3px;color:#333333;">05-10-2025</div><div class="t " style="left:1279.0px;top:848.70px;font-size:14.3px;color:#333333;">07:27 PM</div><div class="t " style="left:1427.0px;top:827.70px;font-size:14.3px;color:#333333;">05-11-2025</div><div class="t " style="left:1427.0px;top:848.70px;font-size:14.3px;color:#333333;">12:00 AM</div><div class="t " style="left:1573.0px;top:827.70px;font-size:14.3px;color:#333333;letter-spacing:-0.5px;">RUNDA RB951</div><div class="r" style="left:1829px;top:824px;width:18px;height:27px;background:#858d96;border-radius:2px;"></div><div class="r" style="left:1836.1px;top:830.8px;width:3.9px;height:3.2px;background:#fff;border-radius:1px;"></div><div class="r" style="left:1836.1px;top:834.2px;width:3.9px;height:3.2px;background:#fff;border-radius:1px;"></div><div class="r" style="left:1836.1px;top:837.6px;width:3.9px;height:3.2px;background:#fff;border-radius:1px;"></div><div class="r" style="left:266.5px;top:890.8px;width:12px;height:12px;background:#2ecc71;border-radius:50%;"></div><div class="t " style="left:285.5px;top:890.89px;font-size:12.3px;color:#8a8a8a;">20h 29m</div><div class="t " style="left:380px;top:891.70px;font-size:14.3px;color:#333333;">TDHP3802</div><div class="t " style="left:564.5px;top:891.70px;font-size:14.3px;color:#333333;">Philomena</div><div class="r" style="left:829px;top:888px;width:26px;height:27px;background:#e4e7e8;box-sizing:border-box;border:1px solid #b9bec2;border-radius:2px;"></div><svg class="r" style="left:837px;top:894.6px;" width="10" height="10" viewBox="0 0 10 10"><path d="M2.3 0.5 L3.8 3 L2.8 4.3 Q4 6.5 5.8 7.3 L7 6.2 L9.5 7.7 L8.5 9.5 Q4.5 9.5 2 6.5 Q0 4 0.8 1.2 Z" fill="#3b4a5a"/></svg><div class="badge" style="left:964.5px;top:889px;">1 Day</div><div class="t " style="left:1062.0px;top:891.70px;font-size:14.3px;color:#333333;letter-spacing:0.2px;">Hotspot</div><div class="badge act" style="left:1176px;top:889px;">Active</div><div class="t " style="left:1279.0px;top:891.70px;font-size:14.3px;color:#333333;">16-10-2025</div><div class="t " style="left:1279.0px;top:912.70px;font-size:14.3px;color:#333333;">05:54 PM</div><div class="t " style="left:1427.0px;top:891.70px;font-size:14.3px;color:#333333;">17-10-2025</div><div class="t " style="left:1427.0px;top:912.70px;font-size:14.3px;color:#333333;">05:54 PM</div><div class="t " style="left:1573.0px;top:891.70px;font-size:14.3px;color:#333333;letter-spacing:-0.5px;">RUNDA RB951</div><div class="r" style="left:1829px;top:888px;width:18px;height:27px;background:#858d96;border-radius:2px;"></div><div class="r" style="left:1836.1px;top:894.8px;width:3.9px;height:3.2px;background:#fff;border-radius:1px;"></div><div class="r" style="left:1836.1px;top:898.2px;width:3.9px;height:3.2px;background:#fff;border-radius:1px;"></div><div class="r" style="left:1836.1px;top:901.6px;width:3.9px;height:3.2px;background:#fff;border-radius:1px;"></div><div class="r" style="left:306px;top:956.7px;width:12px;height:12px;background:#f39c12;border-radius:50%;"></div><div class="t " style="left:380px;top:955.70px;font-size:14.3px;color:#333333;">rundahap</div><div class="t " style="left:564.5px;top:955.70px;font-size:14.3px;color:#333333;">rundahap</div><div class="r" style="left:829px;top:952px;width:26px;height:27px;background:#e4e7e8;box-sizing:border-box;border:1px solid #b9bec2;border-radius:2px;"></div><svg class="r" style="left:837px;top:958.6px;" width="10" height="10" viewBox="0 0 10 10"><path d="M2.3 0.5 L3.8 3 L2.8 4.3 Q4 6.5 5.8 7.3 L7 6.2 L9.5 7.7 L8.5 9.5 Q4.5 9.5 2 6.5 Q0 4 0.8 1.2 Z" fill="#3b4a5a"/></svg><div class="badge" style="left:964.5px;top:953px;">1 Month</div><div class="t " style="left:1062.0px;top:955.70px;font-size:14.3px;color:#333333;letter-spacing:-1.0px;">PPPoE</div><div class="badge act" style="left:1176px;top:953px;">Active</div><div class="t " style="left:1279.0px;top:955.70px;font-size:14.3px;color:#333333;">29-09-2025</div><div class="t " style="left:1279.0px;top:976.70px;font-size:14.3px;color:#333333;">12:00 AM</div><div class="t " style="left:1427.0px;top:955.70px;font-size:14.3px;color:#333333;">29-10-2025</div><div class="t " style="left:1427.0px;top:976.70px;font-size:14.3px;color:#333333;">12:00 AM</div><div class="t " style="left:1573.0px;top:955.70px;font-size:14.3px;color:#333333;letter-spacing:-0.5px;">HAPLITE MADHARA...</div><div class="r" style="left:1829px;top:952px;width:18px;height:27px;background:#858d96;border-radius:2px;"></div><div class="r" style="left:1836.1px;top:958.8px;width:3.9px;height:3.2px;background:#fff;border-radius:1px;"></div><div class="r" style="left:1836.1px;top:962.2px;width:3.9px;height:3.2px;background:#fff;border-radius:1px;"></div><div class="r" style="left:1836.1px;top:965.6px;width:3.9px;height:3.2px;background:#fff;border-radius:1px;"></div><div class="r" style="left:306px;top:1020.7px;width:12px;height:12px;background:#f39c12;border-radius:50%;"></div><div class="t " style="left:380px;top:1019.70px;font-size:14.3px;color:#333333;">KRNR6325</div><div class="t " style="left:564.5px;top:1019.70px;font-size:14.3px;color:#333333;">Lydia</div><div class="r" style="left:829px;top:1016px;width:26px;height:27px;background:#e4e7e8;box-sizing:border-box;border:1px solid #b9bec2;border-radius:2px;"></div><svg class="r" style="left:837px;top:1022.6px;" width="10" height="10" viewBox="0 0 10 10"><path d="M2.3 0.5 L3.8 3 L2.8 4.3 Q4 6.5 5.8 7.3 L7 6.2 L9.5 7.7 L8.5 9.5 Q4.5 9.5 2 6.5 Q0 4 0.8 1.2 Z" fill="#3b4a5a"/></svg><div class="badge" style="left:964.5px;top:1017px;">2 Hours</div><div class="t " style="left:1062.0px;top:1019.70px;font-size:14.3px;color:#333333;letter-spacing:0.2px;">Hotspot</div><div class="badge act" style="left:1176px;top:1017px;">Active</div><div class="t " style="left:1279.0px;top:1019.70px;font-size:14.3px;color:#333333;">17-10-2025</div><div class="t " style="left:1279.0px;top:1040.70px;font-size:14.3px;color:#333333;">12:18 PM</div><div class="t " style="left:1427.0px;top:1019.70px;font-size:14.3px;color:#333333;">17-10-2025</div><div class="t " style="left:1427.0px;top:1040.70px;font-size:14.3px;color:#333333;">02:18 PM</div><div class="t " style="left:1573.0px;top:1019.70px;font-size:14.3px;color:#333333;letter-spacing:-0.5px;">RUNDA RB951</div><div class="r" style="left:1829px;top:1016px;width:18px;height:27px;background:#858d96;border-radius:2px;"></div><div class="r" style="left:1836.1px;top:1022.8px;width:3.9px;height:3.2px;background:#fff;border-radius:1px;"></div><div class="r" style="left:1836.1px;top:1026.2px;width:3.9px;height:3.2px;background:#fff;border-radius:1px;"></div><div class="r" style="left:1836.1px;top:1029.6px;width:3.9px;height:3.2px;background:#fff;border-radius:1px;"></div><div class="r" style="left:0px;top:1066px;width:1897px;height:1px;background:#e8eef5;"></div><div class="r" style="left:220px;top:1066px;width:1487px;height:1px;background:#d0d8e3;"></div></body></html>
